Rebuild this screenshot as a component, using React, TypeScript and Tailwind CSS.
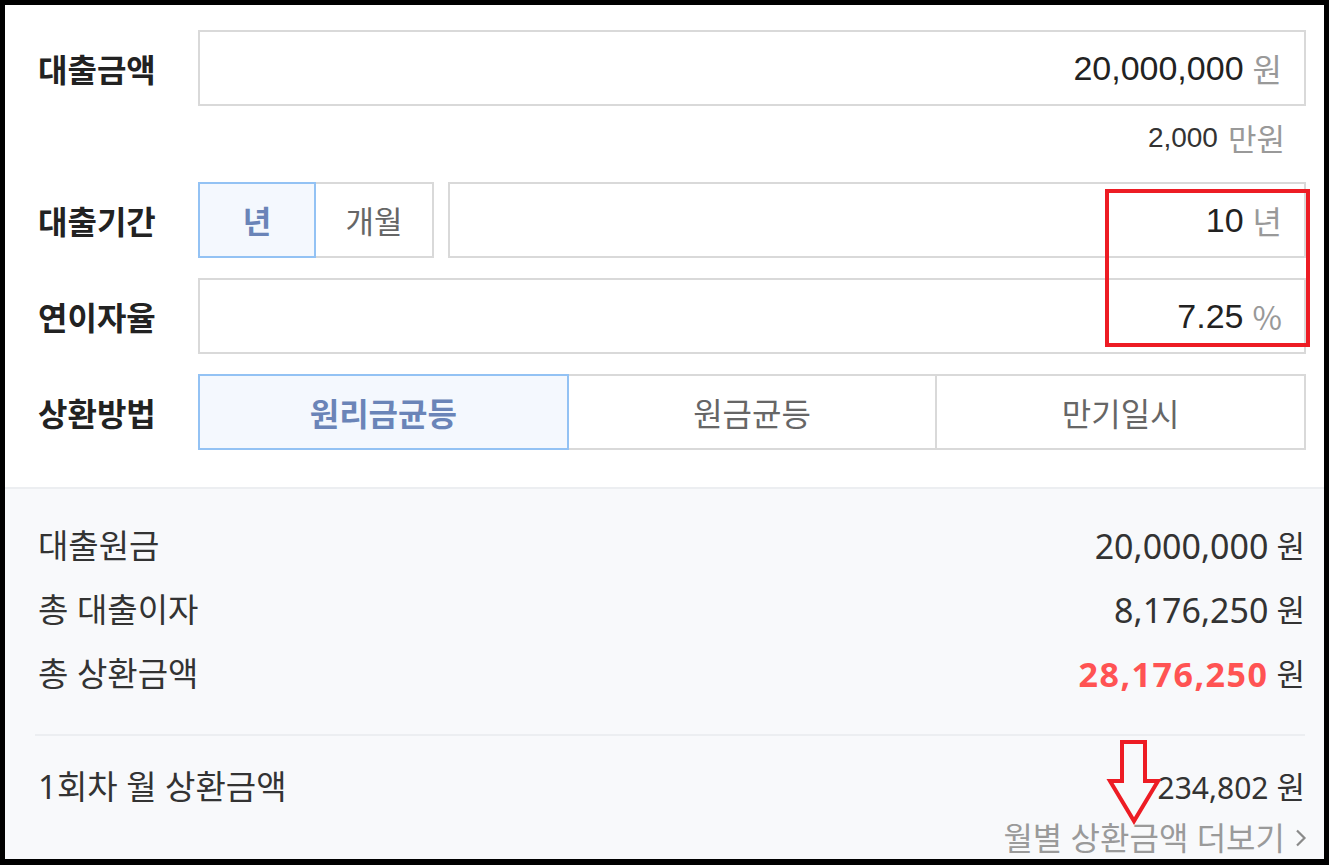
import React from 'react';

const KR = { fontFamily: '"Noto Sans CJK KR", sans-serif' };
const NUM = { fontFamily: '"Liberation Sans", "Noto Sans CJK KR", sans-serif' };
const RES = { fontFamily: '"Noto Sans", "Noto Sans CJK KR", sans-serif' };

const Label: React.FC<{ text: string }> = ({ text }) => (
  <div className="w-[160px] shrink-0 text-[32px] font-bold text-[#222]" style={KR}>
    {text}
  </div>
);

const ValueBox: React.FC<{ value: string; unit: string; className?: string }> = ({ value, unit, className }) => (
  <div className={`flex h-[76px] flex-1 items-center justify-end border-2 border-[#d9d9d9] bg-white pr-[22px] ${className ?? ''}`}>
    <span className="text-[34px] text-[#222]" style={NUM}>{value}</span>
    <span className="ml-[9px] text-[32px] text-[#999]" style={KR}>{unit}</span>
  </div>
);

const ResultRow: React.FC<{ label: string; value: string; red?: boolean; small?: boolean }> = ({ label, value, red, small }) => {
  let valueClass = 'text-[34px] text-[#333]';
  if (red) valueClass = 'text-[34px] font-bold tracking-[1.5px] text-[#ff5353]';
  if (small) valueClass = 'text-[30px] text-[#333]';
  return (
    <div className="flex h-[40px] items-center justify-between" style={RES}>
      <span className="text-[33px] text-[#333]">{label}</span>
      <span className="flex items-center">
        <span className={valueClass}>{value}</span>
        <span className="ml-[8px] text-[31px] text-[#333]">원</span>
      </span>
    </div>
  );
};

export default function App() {
  const methods = ['원리금균등', '원금균등', '만기일시'];

  return (
    <div className="relative h-[865px] w-[1329px] overflow-hidden bg-white">
      <div className="flex h-full flex-col border-t-[5px] border-r-[5px] border-b-[6px] border-l-[5px] border-black">
        {/* inputs */}
        <div className="pt-[25px] pr-[18px] pb-[37px] pl-[33px]">
          <div className="flex items-center">
            <Label text="대출금액" />
            <ValueBox value="20,000,000" unit="원" />
          </div>
          <div className="flex items-center justify-end pt-[16px] pr-[21px] pb-[28px] leading-[32px]">
            <span className="text-[28px] text-[#333]" style={NUM}>2,000</span>
            <span className="ml-[10px] text-[31px] text-[#999]" style={KR}>만원</span>
          </div>

          <div className="flex items-center">
            <Label text="대출기간" />
            <div className="flex h-[76px] w-[118px] items-center justify-center border-2 border-[#93c2f4] bg-[#f4f8fe] text-[31px] font-bold text-[#6a84b8]" style={KR}>
              년
            </div>
            <div className="flex h-[76px] w-[118px] items-center justify-center border-2 border-l-0 border-[#d9d9d9] text-[31px] text-[#666]" style={KR}>
              개월
            </div>
            <ValueBox value="10" unit="년" className="ml-[14px]" />
          </div>

          <div className="mt-[20px] flex items-center">
            <Label text="연이자율" />
            <ValueBox value="7.25" unit="%" />
          </div>

          <div className="mt-[20px] flex items-center">
            <Label text="상환방법" />
            <div className="flex flex-1">
              {methods.map((m, i) => (
                <div
                  key={m}
                  className={
                    i === 0
                      ? 'flex h-[76px] flex-1 items-center justify-center border-2 border-[#93c2f4] bg-[#f4f8fe] text-[32px] font-bold text-[#6a84b8]'
                      : 'flex h-[76px] flex-1 items-center justify-center border-2 border-l-0 border-[#d9d9d9] bg-white text-[32px] text-[#666]'
                  }
                  style={KR}
                >
                  {m}
                </div>
              ))}
            </div>
          </div>
        </div>

        {/* results */}
        <div className="flex-1 border-t-2 border-[#eceef1] bg-[#f8f9fb] pt-[37px] pr-[19px] pl-[30px]">
          <div className="flex flex-col gap-[24px] pl-[3px]">
            <ResultRow label="대출원금" value="20,000,000" />
            <ResultRow label="총 대출이자" value="8,176,250" />
            <ResultRow label="총 상환금액" value="28,176,250" red />
          </div>
          <div className="mt-[40px] h-[2px] bg-[#eceef1]" />
          <div className="pt-[31px] pl-[3px]">
            <ResultRow label="1회차 월 상환금액" value="234,802" small />
          </div>
          <div className="mt-[15px] flex items-center justify-end leading-[32px] text-[#9a9a9a]" style={RES}>
            <span className="text-[32px]">월별 상환금액 더보기</span>
            <svg className="ml-[10px] mr-[-2px]" width="12" height="18" viewBox="0 0 12 18" fill="none">
              <path d="M2 1.5 L9.5 9 L2 16.5" stroke="#8a8a8a" strokeWidth="2.2" />
            </svg>
          </div>
        </div>
      </div>

      {/* red annotations */}
      <svg className="pointer-events-none absolute inset-0" width="1329" height="865" viewBox="0 0 1329 865" fill="none">
        <rect x="1107" y="191" width="201" height="154" stroke="#ed1c24" strokeWidth="4" />
        <path d="M1122 742 H1145 V781 H1158 L1134 821 L1110 781 H1122 Z" stroke="#ed1c24" strokeWidth="4" strokeLinejoin="miter" />
      </svg>
    </div>
  );
}
